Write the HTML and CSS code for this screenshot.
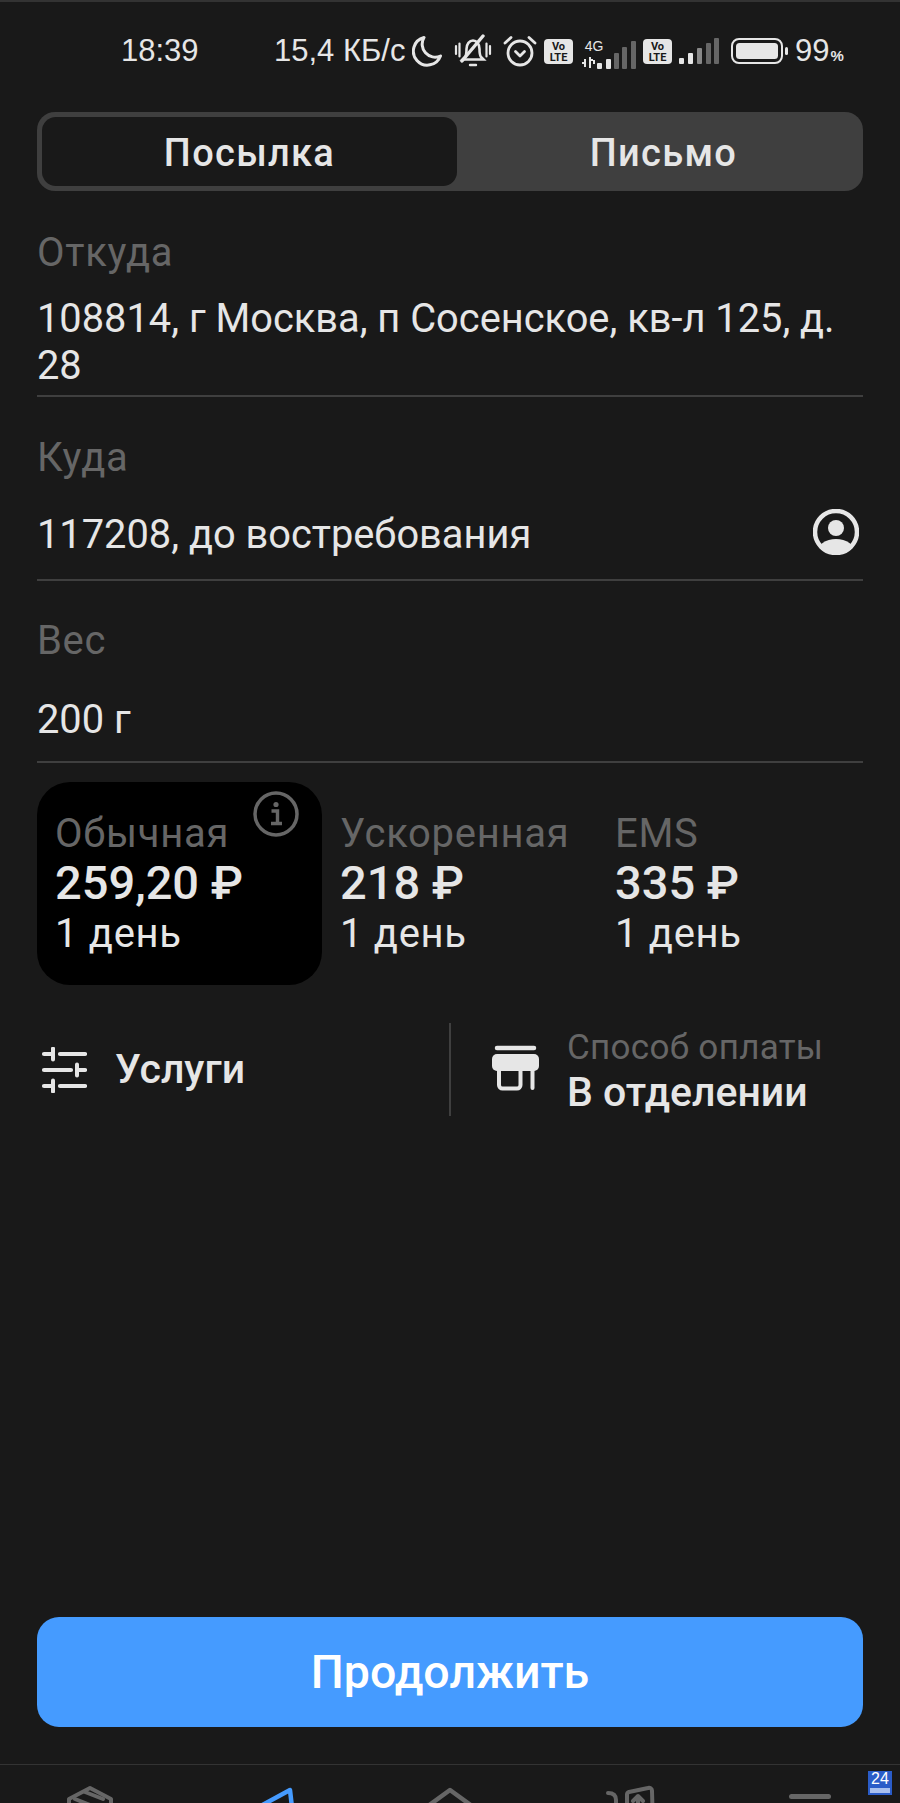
FILE: index.html
```html
<!doctype html>
<html lang="ru">
<head>
    <meta charset="UTF-8">
    <title>Отправка</title>
    <link rel="stylesheet" href="styles.css">
</head>
<body>
<div class="page">
    <div class="status">
        <span class="time">18:39</span>
        <span class="speed">15,4 КБ/с</span>
        <svg class="ic-moon" width="31" height="32" viewBox="0 0 31 32"><path d="M12 2.500A14 14 0 1 0 28.500 21 13 13 0 0 1 12 2.500Z" fill="none" stroke="#e6e6e6" stroke-width="3" stroke-linejoin="round"/></svg>
        <svg class="ic-bell" width="38" height="34" viewBox="0 0 38 34" fill="none" stroke="#e6e6e6" stroke-linecap="round">
            <path d="M11 23c1.500-2 1.500-4 1.500-8 0-5 3-8.500 6.500-8.500s6.500 3.500 6.500 8.500c0 4 0 6 1.500 8l2.500 2.500H8.500Z" stroke-width="2.600"/>
            <path d="M8 27 29 2" stroke-width="3.400"/>
            <path d="M2 12v8M5.500 9.500v13M32.500 9.500v13M36 12v8" stroke-width="2.200"/>
            <path d="M16 31h6" stroke-width="2.400"/>
        </svg>
        <svg class="ic-alarm" width="34" height="33" viewBox="0 0 34 33" fill="none" stroke="#e6e6e6" stroke-linecap="round">
            <circle cx="17" cy="18" r="12" stroke-width="2.800"/>
            <path d="M2 8 8 2.500M32 8l-6-5.500" stroke-width="2.800"/>
            <path d="M12.500 16.500 17 21l4.500-4.500" stroke-width="2.800" stroke-linejoin="round"/>
        </svg>
        <svg class="ic-volte" width="29" height="25" viewBox="0 0 29 25"><rect width="29" height="25" rx="4" fill="#e6e6e6"/><text x="14.500" y="11" class="volte-text" text-anchor="middle">Vo</text><text x="14.500" y="21.500" class="volte-text" text-anchor="middle">LTE</text></svg>
        <svg class="ic-net" width="56" height="34" viewBox="0 -4 56 34">
            <text x="13" y="11" class="net-text" text-anchor="middle">4G</text>
            <path d="M1 23h4M4 19v8M9 17v11M9 20h3M13 20v4" fill="none" stroke="#e6e6e6" stroke-width="2"/>
            <rect x="16" y="23" width="5" height="6" rx="1" fill="#e6e6e6"/><rect x="25" y="19" width="5" height="10" rx="1" fill="#e6e6e6"/>
            <rect x="33" y="13" width="5" height="16" rx="1" fill="#666"/><rect x="41" y="7" width="5" height="22" rx="1" fill="#666"/><rect x="50" y="1" width="5" height="28" rx="1" fill="#666"/>
        </svg>
        <svg class="ic-volte ic-volte2" width="29" height="25" viewBox="0 0 29 25"><rect width="29" height="25" rx="4" fill="#e6e6e6"/><text x="14.500" y="11" class="volte-text" text-anchor="middle">Vo</text><text x="14.500" y="21.500" class="volte-text" text-anchor="middle">LTE</text></svg>
        <svg class="ic-sig" width="40" height="26" viewBox="0 0 40 26">
            <rect x="0" y="20" width="5" height="6" rx="1" fill="#e6e6e6"/><rect x="9" y="15" width="5" height="11" rx="1" fill="#e6e6e6"/><rect x="18" y="10" width="5" height="16" rx="1" fill="#888"/>
            <rect x="27" y="5" width="5" height="21" rx="1" fill="#666"/><rect x="35" y="0" width="5" height="26" rx="1" fill="#666"/>
        </svg>
        <svg class="ic-batt" width="57" height="26" viewBox="0 0 57 26">
            <rect x="1" y="1" width="50" height="24" rx="7" fill="none" stroke="#e6e6e6" stroke-width="2"/>
            <rect x="5" y="5" width="42" height="16" rx="3.500" fill="#e6e6e6"/>
            <rect x="54" y="9" width="3" height="8" rx="1.500" fill="#e6e6e6"/>
        </svg>
        <span class="batt">99<small>%</small></span>
    </div>

    <div class="tabs">
        <div class="tab tab-on">Посылка</div>
        <div class="tab tab-off">Письмо</div>
    </div>

    <div class="field field-from">
        <div class="lbl">Откуда</div>
        <div class="val">108814, г Москва, п Сосенское, кв-л 125, д. 28</div>
    </div>
    <div class="field field-to">
        <div class="lbl">Куда</div>
        <div class="val val-row">
            <span>117208, до востребования</span>
            <svg width="46" height="46" viewBox="0 0 46 46">
                <defs><clipPath id="ring"><circle cx="23" cy="23" r="21"/></clipPath></defs>
                <circle cx="23" cy="23" r="21" fill="none" stroke="#e6e6e6" stroke-width="4.500"/>
                <circle cx="23" cy="19" r="8" fill="#e6e6e6"/>
                <ellipse cx="23" cy="44" rx="19" ry="14" fill="#e6e6e6" clip-path="url(#ring)"/>
            </svg>
        </div>
    </div>
    <div class="field field-weight">
        <div class="lbl">Вес</div>
        <div class="val">200 г</div>
    </div>

    <div class="rates">
        <div class="rate rate-on">
            <div class="rate-name">Обычная</div>
            <div class="rate-price">259,20 ₽</div>
            <div class="rate-days">1 день</div>
            <svg class="info" width="46" height="46" viewBox="0 0 46 46">
                <circle cx="23" cy="23" r="21" fill="none" stroke="#666" stroke-width="3.500"/>
                <circle cx="23" cy="13.500" r="2.600" fill="#666"/>
                <path d="M18.500 20h6v12M18 32.500h11" fill="none" stroke="#666" stroke-width="3.400"/>
            </svg>
        </div>
        <div class="rate rate-fast">
            <div class="rate-name">Ускоренная</div>
            <div class="rate-price">218 ₽</div>
            <div class="rate-days">1 день</div>
        </div>
        <div class="rate">
            <div class="rate-name">EMS</div>
            <div class="rate-price">335 ₽</div>
            <div class="rate-days">1 день</div>
        </div>
    </div>

    <div class="extras">
        <div class="extra-left">
            <svg width="46" height="46" viewBox="0 0 46 46" fill="none" stroke="#e6e6e6" stroke-width="4.200" stroke-linecap="round">
                <path d="M3 7h9M19 7h25M3 23h27M36 23h8M3 39h9M19 39h25"/>
                <path d="M12 1.500v11M36 17.500v11M12 33.500v11" stroke-width="4"/>
            </svg>
            <span class="extra-title">Услуги</span>
        </div>
        <div class="extra-right">
            <svg class="store" width="47" height="46" viewBox="0 0 47 46" fill="none">
                <path d="M5 3h37" stroke="#e6e6e6" stroke-width="4.500" stroke-linecap="round"/>
                <path d="M5 9h37a5 5 0 0 1 5 5v7a5 5 0 0 1-5 5H5a5 5 0 0 1-5-5v-7a5 5 0 0 1 5-5Z" fill="#e6e6e6"/>
                <path d="M7 25v15a3.500 3.500 0 0 0 3.500 3.500H25a3.500 3.500 0 0 0 3.500-3.500V25M40.500 25v18" stroke="#e6e6e6" stroke-width="4" stroke-linecap="round"/>
            </svg>
            <div class="pay">
                <div class="pay-lbl">Способ оплаты</div>
                <div class="extra-title">В отделении</div>
            </div>
        </div>
    </div>

    <div class="spacer"></div>
    <div class="btn">Продолжить</div>

    <div class="nav">
        <svg class="nav-box" width="48" height="40" viewBox="0 0 48 40" fill="none" stroke="#666" stroke-width="4" stroke-linejoin="round" stroke-linecap="round"><path d="M24 3 45 14V40H3V14Z"/><path d="M19 7 37 14M9 14 24 20"/></svg>
        <svg class="nav-plane" width="48" height="40" viewBox="0 0 48 40" fill="none" stroke="#459bff" stroke-width="4.500" stroke-linejoin="round"><path d="M-6 30 40 5 44 40"/></svg>
        <svg class="nav-home" width="48" height="40" viewBox="0 0 48 40" fill="none" stroke="#666" stroke-width="4.500" stroke-linejoin="round"><path d="M2 21 24 5l22 16v20H2Z"/></svg>
        <svg class="nav-up" width="50" height="40" viewBox="0 0 50 40" fill="none" stroke="#666" stroke-width="4" stroke-linecap="round" stroke-linejoin="round"><path d="M2 8c5 0 8 2 8 7v20M21 40V10a3 3 0 0 1 2-3l19-4a3 3 0 0 1 4 3l1 34"/><path d="M32 40V11M27 16l5-5 5 5"/></svg>
        <div class="nav-minus"></div>
    </div>
    <div class="badge">24<i></i></div>
</div>
</body>
</html>
```

FILE: styles.css
```css
* {
    padding: 0;
    margin: 0;
    box-sizing: border-box;
}

body {
    background: #191919;
}

.page {
    width: 900px;
    height: 1803px;
    overflow: hidden;
    position: relative;
    display: flex;
    flex-direction: column;
    background: #191919;
    border-top: 2px solid #333;
    color: #e6e6e6;
    font-family: Roboto, "Noto Sans", sans-serif;
}

/* status bar */
.status {
    height: 98px;
    flex: none;
    display: flex;
    align-items: center;
    padding: 0 0 0 121px;
    font-family: "Liberation Sans", sans-serif;
    font-size: 31px;
}

.status svg {
    flex: none;
}

.time {
    width: 153px;
}

.speed {
    width: 138px;
    white-space: nowrap;
}

.ic-bell { margin-left: 11px; }
.ic-alarm { margin-left: 11px; }
.ic-volte { margin-left: 7px; }
.ic-net { margin: 4px 0 0 8px; }
.ic-volte2 { margin-left: 6px; }
.ic-sig { margin-left: 7px; }
.ic-batt { margin-left: 12px; }

.volte-text {
    font-family: Roboto, sans-serif;
    font-size: 11px;
    font-weight: 700;
    fill: #191919;
}

.net-text {
    font-family: "Liberation Sans", sans-serif;
    font-size: 14px;
    fill: #e6e6e6;
}

.batt {
    margin-left: 7px;
}

.batt small {
    font-size: 15px;
    font-weight: 700;
    margin-left: 1px;
}

/* tabs */
.tabs {
    height: 79px;
    margin: 12px 37px 0;
    flex: none;
    display: flex;
    padding: 5px;
    border-radius: 18px;
    background: #3f3f3f;
}

.tab {
    flex: 1;
    text-align: center;
    font-size: 38px;
    font-weight: 500;
    letter-spacing: 1.300px;
    line-height: 72px;
}

.tab-on {
    flex: none;
    width: 415px;
    background: #191919;
    border-radius: 14px;
}

.tab-off {
    padding-left: 12px;
}

/* fields */
.field {
    margin: 0 37px;
    flex: none;
    border-bottom: 2px solid #3f3f3f;
}

.lbl {
    font-size: 40px;
    color: #666;
    line-height: 44px;
    letter-spacing: 0.700px;
}

.val {
    font-size: 39.800px;
    line-height: 46px;
}

.field-from {
    margin-top: 40px;
    height: 166px;
}

.field-from .val {
    margin-top: 20px;
    line-height: 47px;
}

.field-to {
    margin-top: 39px;
    height: 145px;
}

.field-weight {
    margin-top: 38px;
    height: 144px;
}

.field-to .val {
    margin-top: 32px;
}

.field-weight .val {
    margin-top: 34px;
}

.val-row {
    display: flex;
    justify-content: space-between;
    align-items: center;
}

.val-row svg {
    margin: -3px 4px 3px 0;
}

/* tariffs */
.rates {
    margin: 19px 37px 0;
    height: 203px;
    flex: none;
    display: flex;
}

.rate {
    padding: 30px 0 0 19px;
}

.rate-on {
    width: 285px;
    padding-left: 18px;
    background: #000;
    border-radius: 33px;
    position: relative;
}

.rate-fast {
    width: 274px;
    padding-left: 18px;
}

.rate-name {
    font-size: 40px;
    line-height: 43px;
    color: #666;
    letter-spacing: 0.700px;
}

.rate-price {
    font-size: 47px;
    font-weight: 500;
    line-height: 56px;
}

.rate-days {
    font-size: 40px;
    line-height: 46px;
    letter-spacing: 0.700px;
}

.info {
    position: absolute;
    right: 23px;
    top: 9px;
}

/* services and payment */
.extras {
    margin: 38px 37px 0;
    height: 93px;
    flex: none;
    display: flex;
}

.extra-left {
    width: 414px;
    padding-left: 4px;
    display: flex;
    align-items: center;
    gap: 28px;
    border-right: 2px solid #3f3f3f;
}

.extra-left .extra-title {
    margin-bottom: 2px;
}

.extra-right {
    padding-left: 41px;
    display: flex;
    align-items: center;
    gap: 28px;
}

.store {
    margin-top: -4px;
}

.pay {
    padding-top: 4px;
}

.extra-title {
    font-size: 41px;
    font-weight: 500;
    line-height: 48px;
}

.pay-lbl {
    font-size: 35px;
    line-height: 41px;
    color: #666;
    letter-spacing: 0.300px;
}

.spacer {
    flex: 1;
}

.btn {
    height: 110px;
    margin: 0 37px;
    flex: none;
    border-radius: 22px;
    background: #459bff;
    color: #fff;
    text-align: center;
    line-height: 110px;
    font-size: 46.500px;
    font-weight: 500;
}

/* bottom nav, runs past the photo edge */
.nav {
    margin-top: 37px;
    height: 39px;
    flex: none;
    overflow: hidden;
    border-top: 1px solid #333;
    display: flex;
    padding: 20px 0 0 66px;
    align-items: flex-start;
}

.nav-plane { margin-left: 136px; }
.nav-home { margin-left: 128px; }
.nav-up { margin-left: 132px; }

.nav-minus {
    width: 42px;
    height: 5px;
    margin: 9px 0 0 133px;
    border-radius: 3px;
    background: #666;
}

.badge {
    position: absolute;
    left: 868px;
    top: 1769px;
    width: 24px;
    height: 24px;
    background: #2a5cc8;
    color: #fff;
    font-family: "Liberation Sans", sans-serif;
    font-size: 16px;
    line-height: 16px;
    text-align: center;
}

.badge i {
    display: block;
    height: 5px;
    margin: 1px 2px 0;
    background: #a9c0ee;
}
```
